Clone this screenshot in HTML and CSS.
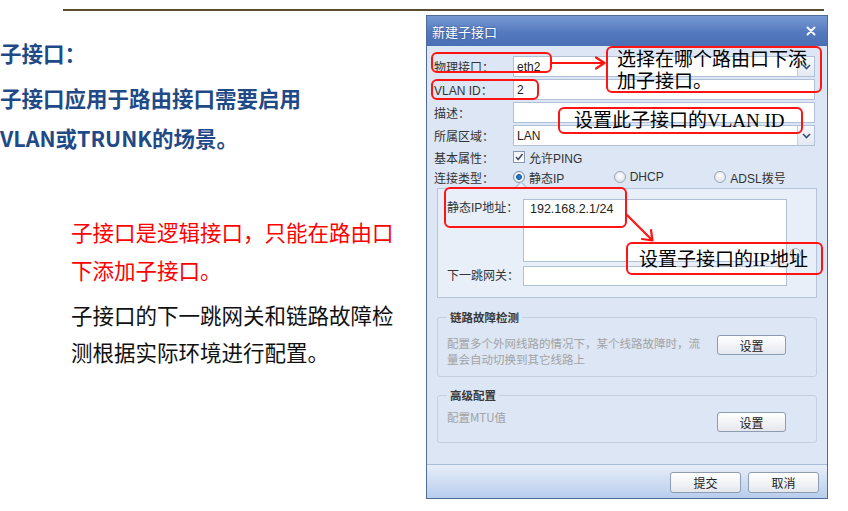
FILE: index.html
```html
<!DOCTYPE html>
<html lang="zh-CN">
<head>
<meta charset="utf-8">
<title>子接口</title>
<link rel="stylesheet" href="styles.css">
</head>
<body>
<div class="page">
  <div class="rule"></div>
  <div class="main">
    <section class="intro">
      <h1 class="intro-title">子接口：</h1>
      <p class="intro-lead">子接口应用于路由接口需要启用<br>VLAN或TRUNK的场景。</p>
      <p class="intro-note">子接口是逻辑接口，只能在路由口<br>下添加子接口。</p>
      <p class="intro-text">子接口的下一跳网关和链路故障检<br>测根据实际环境进行配置。</p>
    </section>

    <div class="dialog">
      <div class="titlebar">
        <span class="title">新建子接口</span>
        <svg class="close" width="10" height="10" viewBox="0 0 10 10"><path d="M1.5 1.5 L8.5 8.5 M8.5 1.5 L1.5 8.5" stroke="#f2f5fb" stroke-width="2" stroke-linecap="round"/></svg>
      </div>

      <div class="dlg-body">
        <div class="form">
          <div class="lbl">物理接口：</div>
          <div class="field"><span>eth2</span>
            <span class="drop"><svg width="9" height="6" viewBox="0 0 9 6"><path d="M1 1 L4.5 4.5 L8 1" fill="none" stroke="#34507e" stroke-width="1.6"/></svg></span>
          </div>

          <div class="lbl">VLAN ID：</div>
          <div class="field"><span>2</span></div>

          <div class="lbl">描述：</div>
          <div class="field"></div>

          <div class="lbl">所属区域：</div>
          <div class="field"><span>LAN</span>
            <span class="drop"><svg width="9" height="6" viewBox="0 0 9 6"><path d="M1 1 L4.5 4.5 L8 1" fill="none" stroke="#34507e" stroke-width="1.6"/></svg></span>
          </div>

          <div class="lbl">基本属性：</div>
          <div class="opts">
            <span class="opt"><span class="checkbox"><svg width="10" height="10" viewBox="0 0 10 10"><path d="M2 5 L4.2 7.5 L8.5 2" fill="none" stroke="#3b4d66" stroke-width="1.5"/></svg></span>允许PING</span>
          </div>

          <div class="lbl">连接类型：</div>
          <div class="opts">
            <span class="opt"><span class="radio on"></span>静态IP</span>
            <span class="opt"><span class="radio"></span>DHCP</span>
            <span class="opt"><span class="radio"></span>ADSL拨号</span>
          </div>
        </div>

        <div class="panel">
          <div class="plbl">静态IP地址：</div>
          <div class="area">192.168.2.1/24</div>
          <div class="help"></div>
          <div class="plbl mid">下一跳网关：</div>
          <div class="field"></div>
        </div>

        <fieldset class="group">
          <legend>链路故障检测</legend>
          <div class="desc">配置多个外网线路的情况下，某个线路故障时，流<br>量会自动切换到其它线路上</div>
          <button class="btn" type="button">设置</button>
        </fieldset>

        <fieldset class="group group-adv">
          <legend>高级配置</legend>
          <div class="desc desc-up">配置MTU值</div>
          <button class="btn" type="button">设置</button>
        </fieldset>
      </div>

      <div class="footer">
        <button class="btn btn-foot" type="button">提交</button>
        <button class="btn btn-foot" type="button">取消</button>
      </div>

      <div class="annot a1"></div>
      <div class="annot a2"></div>
      <div class="annot a3"><span class="annot-text">选择在哪个路由口下添<br>加子接口。</span></div>
      <div class="annot a4"><span class="annot-text">设置此子接口的VLAN ID</span></div>
      <div class="annot a5"></div>
      <div class="annot a6"><span class="annot-text">设置子接口的IP地址</span></div>
      <svg class="arrows" width="400" height="482" viewBox="0 0 400 482">
        <path d="M125 47 L177 47 M169 41.5 L177.5 47 L169 52.5" fill="none" stroke="#ff1414" stroke-width="2.2" stroke-linejoin="round" stroke-linecap="round"/>
        <path d="M200 199 L225 224 M224 214 L225.5 224.5 L215 223" fill="none" stroke="#ff1414" stroke-width="2.2" stroke-linejoin="round" stroke-linecap="round"/>
      </svg>
    </div>
  </div>
</div>
</body>
</html>
```
FILE: styles.css
```css
* { box-sizing: border-box; }
html, body { margin: 0; padding: 0; }
body {
  width: 848px;
  height: 511px;
  overflow: hidden;
  background: #ffffff;
  font-family: "Noto Sans CJK SC", sans-serif;
}

.page { padding-top: 9px; }
.rule {
  margin-left: 63px;
  width: 761px;
  height: 2px;
  background: #5a4c31;
}
.main {
  display: flex;
  margin-top: 4px;
}

/* left text column */
.intro { width: 426px; flex: none; }
.intro-title,
.intro-lead {
  font-family: "Noto Sans CJK SC", sans-serif;
  font-size: 21.5px;
  font-weight: 700;
  color: #1f4a87;
}
.intro-title { margin: 23px 0 0; line-height: 30px; }
.intro-lead { margin: 10px 0 0; line-height: 40px; }
.intro-note {
  margin: 55px 0 0 71px;
  font-size: 21.5px;
  line-height: 38px;
  color: #ff0000;
}
.intro-text {
  margin: 7px 0 0 71px;
  font-size: 21.5px;
  line-height: 37px;
  color: #111111;
}

/* dialog */
.dialog {
  position: relative;
  flex: none;
  width: 402px;
  height: 484px;
  border: 1px solid #4f6b98;
  background: #dce6f4;
  display: flex;
  flex-direction: column;
  font-family: "Liberation Sans", "Noto Sans CJK SC", sans-serif;
  font-size: 12px;
  color: #333333;
}
.titlebar {
  flex: none;
  height: 30px;
  display: flex;
  align-items: center;
  justify-content: space-between;
  padding: 0 11px 0 5px;
  background: linear-gradient(#7799d3, #5479be 55%, #4a6fb4);
}
.title {
  font-family: "Noto Sans CJK SC", sans-serif;
  font-size: 13px;
  color: #ffffff;
  text-shadow: 0 0 2px rgba(10, 30, 80, 0.5);
}
.close { display: block; }

.dlg-body {
  flex: 1;
  display: flex;
  flex-direction: column;
}

.form {
  display: grid;
  grid-template-columns: 79px 302px;
  grid-template-rows: 21px 21px 21px 21px 18px 18px;
  row-gap: 2px;
  margin: 10px 0 0 7px;
}
.lbl {
  display: flex;
  align-items: center;
  white-space: nowrap;
  color: #333333;
}
.field {
  position: relative;
  display: flex;
  align-items: center;
  padding-left: 3px;
  background: #ffffff;
  border: 1px solid #afc0d7;
  color: #222222;
}
.drop {
  position: absolute;
  right: 0;
  top: 0;
  bottom: 0;
  width: 17px;
  display: flex;
  align-items: center;
  justify-content: center;
  border-left: 1px solid #c2cfe0;
  background: linear-gradient(#f6f8fb, #e3e9f1);
}
.opts {
  display: flex;
  align-items: center;
  color: #333333;
}
.opt {
  width: 101px;
  display: flex;
  align-items: center;
  gap: 4px;
  white-space: nowrap;
}
.checkbox {
  width: 12px;
  height: 12px;
  border: 1px solid #8596ad;
  background: linear-gradient(#f2f4f7, #ffffff);
  display: flex;
  align-items: center;
  justify-content: center;
}
.radio {
  width: 12px;
  height: 12px;
  border-radius: 50%;
  border: 1px solid #9aa6b6;
  background: radial-gradient(circle at 50% 40%, #ffffff, #d5dbe3);
}
.radio.on {
  background: radial-gradient(circle, #2f86d6 0, #1d5fae 2.6px, #f4f6f9 3.2px, #dfe4ea 100%);
  border-color: #7d8fa6;
}

/* static ip panel */
.panel {
  position: relative;
  margin: 2px 10px 0;
  border: 1px solid #b3c5dc;
  background: #e9eff8;
  padding: 10px 15px 11px 9px;
  display: grid;
  grid-template-columns: 76px 264px 14px;
  grid-template-rows: 63px 20px;
  row-gap: 4px;
}
.panel::before {
  content: "";
  position: absolute;
  left: 76px;
  top: -8px;
  border-left: 7px solid transparent;
  border-right: 7px solid transparent;
  border-bottom: 7px solid #b3c5dc;
}
.panel::after {
  content: "";
  position: absolute;
  left: 77px;
  top: -6px;
  border-left: 6px solid transparent;
  border-right: 6px solid transparent;
  border-bottom: 6px solid #e9eff8;
}
.plbl {
  line-height: 18px;
  white-space: nowrap;
  color: #333333;
}
.plbl.mid { align-self: center; line-height: 20px; }
.area {
  background: #ffffff;
  border: 1px solid #afc0d7;
  padding: 0 6px;
  line-height: 18px;
  font-size: 12.5px;
  color: #222222;
}
.help {
  align-self: end;
  margin: 0 0 3px 3px;
  width: 11px;
  height: 11px;
  border-radius: 50%;
  border: 1px solid #a8b3c2;
  background: #f0f2f5;
}

/* group boxes */
.group {
  margin: 11px 10px 0;
  min-width: 0;
  border: 1px solid #c3d0e2;
  border-radius: 3px;
  padding: 10px 30px 9px 9px;
  display: flex;
  justify-content: space-between;
  align-items: flex-start;
}
.group-adv {
  margin-top: 10px;
  padding-top: 9px;
  padding-bottom: 10px;
}
.group legend {
  padding: 0 3px;
  font-family: "Noto Sans CJK SC", sans-serif;
  font-size: 11.5px;
  font-weight: 700;
  line-height: 16px;
  color: #3a3a3a;
}
.desc {
  font-family: "Noto Sans CJK SC", sans-serif;
  font-size: 11.5px;
  line-height: 16px;
  color: #a3a3a3;
  white-space: nowrap;
}
.desc-up { margin-top: -3px; }

.btn {
  width: 69px;
  height: 20px;
  padding: 0;
  border: 1px solid #8d9cb1;
  border-radius: 3px;
  background: linear-gradient(#ffffff, #f3f4f7 50%, #e3e7ed);
  font-family: "Noto Sans CJK SC", sans-serif;
  font-size: 12px;
  color: #222222;
  display: flex;
  align-items: center;
  justify-content: center;
}

.footer {
  flex: none;
  height: 34px;
  border-top: 1px solid #a9bcd8;
  background: linear-gradient(#e7eef9, #cddcf2 55%, #b8cdee);
  display: flex;
  justify-content: flex-end;
  align-items: center;
  gap: 7px;
  padding: 1px 8px 0 0;
}
.btn-foot { width: 71px; height: 21px; }

/* red annotations over the dialog */
.annot {
  position: absolute;
  border: 2px solid #ff1414;
  border-radius: 6px;
}
.annot-text {
  display: block;
  font-family: "Liberation Serif", "Noto Sans CJK SC", serif;
  font-size: 19px;
  color: #000000;
  white-space: nowrap;
}
.a1 { left: 4px; top: 36px; width: 121px; height: 21px; }
.a2 { left: 4px; top: 63px; width: 108px; height: 21px; }
.a3 { left: 179px; top: 30px; width: 216px; height: 47px; padding: 1px 0 0 9px; }
.a3 .annot-text { line-height: 22px; }
.a4 { left: 131px; top: 91px; width: 245px; height: 27px; padding-left: 14px; }
.a4 .annot-text { line-height: 23px; }
.a5 { left: 17px; top: 171px; width: 183px; height: 41px; }
.a6 { left: 199px; top: 226px; width: 197px; height: 33px; padding: 1px 0 0 11px; }
.a6 .annot-text { line-height: 29px; }
.arrows {
  position: absolute;
  left: 0;
  top: 0;
  pointer-events: none;
}
```
